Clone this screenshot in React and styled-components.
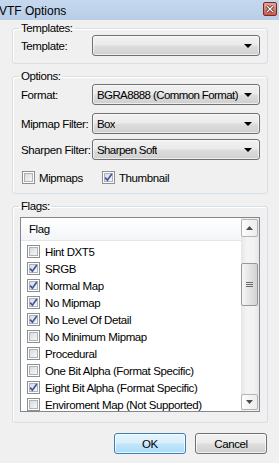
import React from "react";
import styled, { createGlobalStyle } from "styled-components";

const Global = createGlobalStyle`
  html, body { margin: 0; padding: 0; background: #f0f0f0; }
  body {
    font-family: "Liberation Sans", Arial, sans-serif;
    font-size: 11.5px;
    letter-spacing: -0.4px;
    color: #000;
  }
  * { box-sizing: border-box; }
`;

const Window = styled.div`
  width: 279px;
  height: 463px;
  overflow: hidden;
  background: #f0f0f0;
  display: flex;
  flex-direction: column;
`;

const TitleBar = styled.div`
  height: 20px;
  flex: none;
  display: flex;
  align-items: center;
  justify-content: space-between;
  padding: 0 2px 0 0;
  background: linear-gradient(#c5d8ef, #b9cde7);
`;

const Title = styled.span`
  font-size: 12px;
  letter-spacing: 0;
  margin-left: -1px;
  margin-top: 1px;
`;

const CloseBtn = styled.div`
  width: 14px;
  height: 14px;
  margin-top: -2px;
  border: 1px solid #7a2a22;
  border-radius: 2px;
  background: linear-gradient(#e6a497, #c8594b);
  display: flex;
  align-items: center;
  justify-content: center;
`;

const Body = styled.div`
  flex: 1;
  display: flex;
  flex-direction: column;
  padding: 2px 11px 0 12px;
`;

const Group = styled.fieldset`
  margin: ${(p) => p.$mt || 0}px 0 0 0;
  padding: 0;
  min-inline-size: 0;
  border: 1px solid #d5dfe5;
  border-radius: 3px;
  box-shadow: inset 1px 1px 0 #fff;
`;

const Legend = styled.legend`
  margin-left: 6px;
  padding: 0 2px;
  line-height: 13px;
`;

const GroupContent = styled.div`
  padding: ${(p) => p.$pt || 0}px 7px ${(p) => p.$pb || 0}px ${(p) => p.$pl ?? 8}px;
  display: flex;
  flex-direction: column;
`;

const FieldRow = styled.div`
  display: grid;
  grid-template-columns: 71px 1fr;
  align-items: center;
  white-space: nowrap;
  margin-top: ${(p) => p.$mt || 0}px;
`;

const Combo = styled.div`
  height: 21px;
  min-width: 0;
  border: 1px solid #707070;
  border-radius: 3px;
  background: linear-gradient(#f2f2f2 0%, #ebebeb 45%, #dddddd 55%, #cfcfcf 100%);
  box-shadow: inset 0 0 0 1px rgba(255, 255, 255, 0.6);
  display: flex;
  align-items: center;
  justify-content: space-between;
  gap: 3px;
  padding: 0 7px 0 4px;
  white-space: nowrap;
`;

const ComboText = styled.span`
  overflow: hidden;
  min-width: 0;
  letter-spacing: -0.6px;
`;

const Arrow = styled.span`
  width: 0;
  height: 0;
  border-left: 4px solid transparent;
  border-right: 4px solid transparent;
  border-top: 4px solid #000;
  flex: none;
`;

const CheckRow = styled.div`
  display: flex;
  align-items: center;
  margin-top: 11px;
  height: 13px;
`;

const CheckItem = styled.label`
  display: flex;
  align-items: center;
  gap: 4px;
  width: ${(p) => p.$w || "auto"};
  margin-left: ${(p) => p.$ml || 0}px;
`;

const Box = styled.span`
  width: 13px;
  height: 13px;
  flex: none;
  border: 1px solid #8e8f8f;
  background: #fff;
  padding: 1px;
  display: flex;
`;

const BoxInner = styled.span`
  flex: 1;
  border: 1px solid #aeb3b9;
  background: linear-gradient(135deg, #d8dbe0, #f7f7f7);
  display: flex;
  align-items: center;
  justify-content: center;
`;

const Check = ({ on }) => (
  <Box>
    <BoxInner>
      {on && (
        <svg width="9" height="9" viewBox="0 0 9 9" style={{ margin: -2 }}>
          <path d="M1.2 4.6 L3.4 7.2 L7.8 1" fill="none" stroke="#3c56a0" strokeWidth="1.7" />
        </svg>
      )}
    </BoxInner>
  </Box>
);

const ListBox = styled.div`
  margin-top: 4px;
  height: 195px;
  border: 1px solid #828790;
  background: #fff;
  display: flex;
  overflow: hidden;
`;

const ListMain = styled.div`
  flex: 1;
  display: flex;
  flex-direction: column;
  overflow: hidden;
`;

const Header = styled.div`
  height: 23px;
  flex: none;
  display: flex;
  align-items: center;
  padding-left: 8px;
  background: linear-gradient(#ffffff, #f4f5f7);
  border-bottom: 1px solid #e3e5e8;
`;

const Rows = styled.div`
  padding-top: 2px;
`;

const Row = styled.div`
  height: 17px;
  display: flex;
  align-items: center;
  gap: 5px;
  padding-left: 6px;
  white-space: nowrap;
`;

const ScrollBar = styled.div`
  width: 18px;
  flex: none;
  display: flex;
  flex-direction: column;
  padding: 1px 1px 1px 0;
  background: linear-gradient(to right, #e6e6e6, #f3f3f3 30%, #f3f3f3 70%, #e6e6e6);
`;

const ScrollBtn = styled.div`
  height: ${(p) => p.$h}px;
  flex: none;
  border: 1px solid #b4b4b4;
  border-radius: 2px;
  background: linear-gradient(to right, #fdfdfd, #ececec);
  display: flex;
  align-items: center;
  justify-content: center;
`;

const Track = styled.div`
  height: ${(p) => p.$h || 0}px;
  flex: ${(p) => (p.$grow ? 1 : "none")};
`;

const Thumb = styled.div`
  height: 43px;
  flex: none;
  border: 1px solid #979797;
  border-radius: 2px;
  background: linear-gradient(to right, #f6f6f6, #e0e0e0 60%, #d2d2d2);
  display: flex;
  align-items: center;
  justify-content: center;
`;

const Buttons = styled.div`
  margin-top: 10px;
  display: flex;
  justify-content: flex-end;
  gap: 9px;
  padding-right: 1px;
`;

const Button = styled.div`
  width: 72px;
  height: 21px;
  border: 1px solid ${(p) => (p.$default ? "#3c7fb1" : "#707070")};
  border-radius: 3px;
  background: ${(p) =>
    p.$default
      ? "linear-gradient(#e5f4fc 0%, #d9effc 45%, #c0e4fa 55%, #addcf7 100%)"
      : "linear-gradient(#f2f2f2 0%, #ebebeb 45%, #dddddd 55%, #cfcfcf 100%)"};
  box-shadow: inset 0 0 0 1px rgba(255, 255, 255, 0.7);
  display: flex;
  align-items: center;
  justify-content: center;
`;

const flags = [
  ["Hint DXT5", false],
  ["SRGB", true],
  ["Normal Map", true],
  ["No Mipmap", true],
  ["No Level Of Detail", true],
  ["No Minimum Mipmap", false],
  ["Procedural", false],
  ["One Bit Alpha (Format Specific)", false],
  ["Eight Bit Alpha (Format Specific)", true],
  ["Enviroment Map (Not Supported)", false],
];

export default function App() {
  return (
    <Window>
      <Global />
      <TitleBar>
        <Title>VTF Options</Title>
        <CloseBtn>
          <svg width="8" height="8" viewBox="0 0 8 8">
            <path d="M1 1 L7 7 M7 1 L1 7" stroke="#3a1410" strokeWidth="2.6" />
            <path d="M1 1 L7 7 M7 1 L1 7" stroke="#fff" strokeWidth="1.4" />
          </svg>
        </CloseBtn>
      </TitleBar>
      <Body>
        <Group>
          <Legend>Templates:</Legend>
          <GroupContent $pb={7}>
            <FieldRow>
              <span>Template:</span>
              <Combo>
                <ComboText />
                <Arrow />
              </Combo>
            </FieldRow>
          </GroupContent>
        </Group>

        <Group $mt={6}>
          <Legend>Options:</Legend>
          <GroupContent $pt={1} $pb={9}>
            <FieldRow>
              <span>Format:</span>
              <Combo>
                <ComboText>BGRA8888 (Common Format)</ComboText>
                <Arrow />
              </Combo>
            </FieldRow>
            <FieldRow $mt={8}>
              <span>Mipmap Filter:</span>
              <Combo>
                <ComboText>Box</ComboText>
                <Arrow />
              </Combo>
            </FieldRow>
            <FieldRow $mt={5}>
              <span>Sharpen Filter:</span>
              <Combo>
                <ComboText>Sharpen Soft</ComboText>
                <Arrow />
              </Combo>
            </FieldRow>
            <CheckRow>
              <CheckItem $ml={1} $w="80px">
                <Check />
                <span>Mipmaps</span>
              </CheckItem>
              <CheckItem>
                <Check on />
                <span>Thumbnail</span>
              </CheckItem>
            </CheckRow>
          </GroupContent>
        </Group>

        <Group $mt={6}>
          <Legend>Flags:</Legend>
          <GroupContent $pl={7} $pb={10}>
            <ListBox>
              <ListMain>
                <Header>Flag</Header>
                <Rows>
                  {flags.map(([name, on]) => (
                    <Row key={name}>
                      <Check on={on} />
                      <span>{name}</span>
                    </Row>
                  ))}
                </Rows>
              </ListMain>
              <ScrollBar>
                <ScrollBtn $h={18}>
                  <svg width="7" height="4" viewBox="0 0 7 4">
                    <path d="M0 4 L3.5 0 L7 4 Z" fill="#4d4d4d" />
                  </svg>
                </ScrollBtn>
                <Track $h={26} />
                <Thumb>
                  <svg width="7" height="6" viewBox="0 0 7 6">
                    <path d="M0 0.5 H7 M0 2.5 H7 M0 4.5 H7" stroke="#6a6a6a" strokeWidth="1" />
                  </svg>
                </Thumb>
                <Track $grow />
                <ScrollBtn $h={16}>
                  <svg width="7" height="4" viewBox="0 0 7 4">
                    <path d="M0 0 L3.5 4 L7 0 Z" fill="#4d4d4d" />
                  </svg>
                </ScrollBtn>
              </ScrollBar>
            </ListBox>
          </GroupContent>
        </Group>

        <Buttons>
          <Button $default>OK</Button>
          <Button>Cancel</Button>
        </Buttons>
      </Body>
    </Window>
  );
}
